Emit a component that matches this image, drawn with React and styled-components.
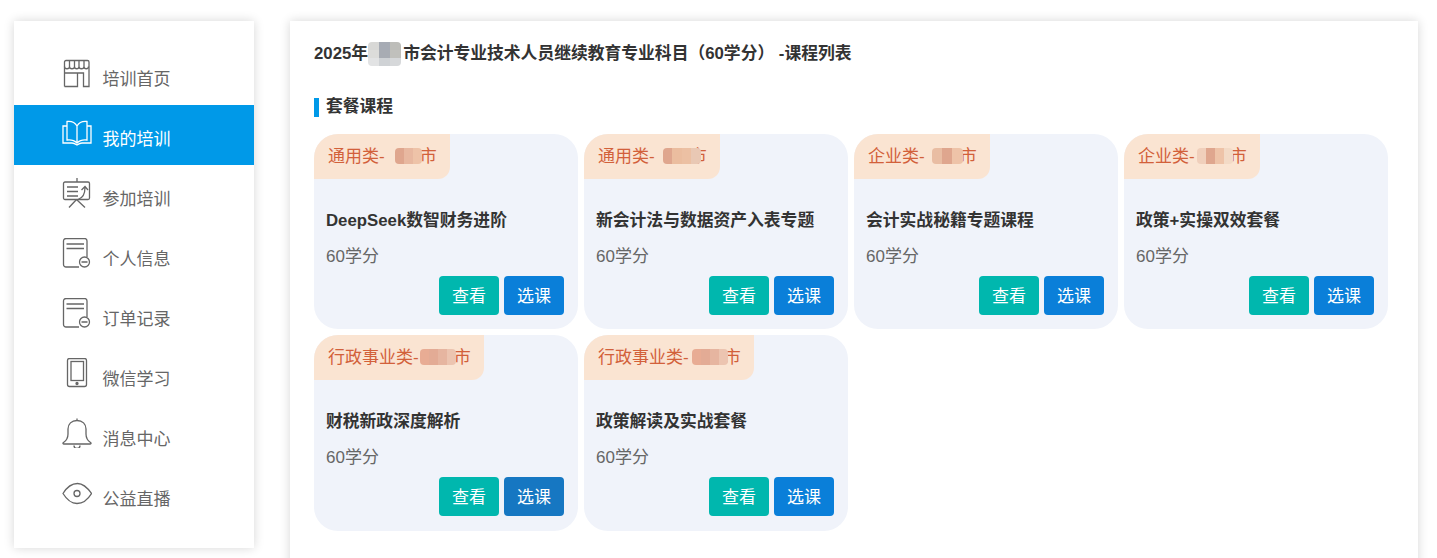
import React from "react";
import styled, { createGlobalStyle } from "styled-components";

const GlobalStyle = createGlobalStyle`
  html, body {
    margin: 0;
    padding: 0;
    height: 558px;
    overflow: hidden;
    background: #fff;
    font-family: "Liberation Sans", "Noto Sans CJK SC", sans-serif;
  }
  * { box-sizing: border-box; }
`;

const Page = styled.div`
  display: flex;
  align-items: flex-start;
  gap: 36px;
  padding: 21px 19px 0 14px;
`;

const Sidebar = styled.nav`
  flex: 0 0 240px;
  height: 527px;
  padding-top: 24px;
  background: #fff;
  box-shadow: 0 0 10px rgba(0, 0, 0, 0.16);
`;

const NavItem = styled.div`
  display: flex;
  align-items: center;
  gap: 10.5px;
  height: 60px;
  padding-left: 48px;
  font-size: 17px;
  color: ${(p) => (p.$active ? "#fff" : "#666")};
  background: ${(p) => (p.$active ? "#0099e8" : "transparent")};
`;

const NavIcon = styled.svg`
  flex: 0 0 30px;
  width: 30px;
  height: 30px;
  margin-bottom: 4px;
  fill: none;
  stroke: currentColor;
  stroke-width: 1.3;
`;

const NavLabel = styled.span`
  padding-top: 4px;
`;

const Main = styled.main`
  flex: 1;
  height: 600px;
  padding: 21px 24px 0;
  background: #fff;
  box-shadow: 0 0 10px rgba(0, 0, 0, 0.16);
`;

const Title = styled.h1`
  margin: 0;
  font-size: 16.8px;
  line-height: 24px;
  font-weight: 700;
  color: #333;
`;

const SectionHead = styled.h2`
  display: flex;
  align-items: flex-start;
  gap: 7px;
  height: 19px;
  margin: 32px 0 17px;
  font-size: 16.8px;
  line-height: 17px;
  font-weight: 700;
  color: #333;
  &::before {
    content: "";
    width: 5px;
    height: 19px;
    background: #0099e8;
  }
`;

const CardGrid = styled.div`
  display: flex;
  flex-wrap: wrap;
  gap: 6px;
`;

const Card = styled.article`
  width: 264px;
  height: 195.4px;
  border-radius: 24px;
  overflow: hidden;
  background: #f0f3fa;
`;

const Tag = styled.div`
  display: inline-block;
  vertical-align: top;
  height: 45px;
  padding: 0 13.7px 0 14px;
  font-size: 17px;
  line-height: 46px;
  color: #d2603a;
  background: #fae4d2;
  border-bottom-right-radius: 12px;
`;

const CardTitle = styled.h3`
  margin: 30px 0 0;
  padding-left: 12px;
  font-size: 16.8px;
  line-height: 24px;
  font-weight: 700;
  color: #333;
`;

const Credits = styled.p`
  margin: 12px 0 0;
  padding-left: 12px;
  font-size: 17px;
  line-height: 24px;
  color: #666;
`;

const Actions = styled.div`
  display: flex;
  justify-content: flex-end;
  gap: 5px;
  margin-top: 7px;
  padding-right: 14px;
`;

const Button = styled.button`
  width: 60px;
  height: 39px;
  padding: 0 0 2px;
  border: 0;
  border-radius: 4px;
  font: inherit;
  font-size: 17px;
  color: #fff;
  background: ${(p) => p.$bg};
`;

// pixelated cover over the blanked-out city name
const Masked = styled.span`
  position: relative;
  display: inline-block;
  width: 35px;
  height: 1em;
`;

const MosaicGrid = styled.span`
  position: absolute;
  left: ${(p) => p.$left}px;
  top: ${(p) => p.$top}px;
  display: grid;
  grid-template-columns: repeat(${(p) => p.$cols}, ${(p) => p.$cell}px);
  grid-auto-rows: ${(p) => p.$rowH}px;
  border-radius: 4px;
  overflow: hidden;
  filter: blur(0.5px);
`;

const MosaicCell = styled.span`
  background: ${(p) => p.$c};
`;

const Mosaic = ({ colors, cols, cell, rowH, left, top }) => (
  <Masked>
    <MosaicGrid $cols={cols} $cell={cell} $rowH={rowH} $left={left} $top={top}>
      {colors.map((c, i) => (
        <MosaicCell key={i} $c={c} />
      ))}
    </MosaicGrid>
  </Masked>
);

const StoreIcon = () => (
  <NavIcon viewBox="0 0 30 30">
    <path d="M2.5 28.5V4a1.5 1.5 0 0 1 1.5-1.5h21.5A1.5 1.5 0 0 1 27 4v24.5H21.5V15H2.5M15.5 15v13.5H2.5" />
    <path d="M2.5 8.5c0 3 5 3 5 0c0 3 5 3 5 0c0 3 4.500 3 4.500 0c0 3 5 3 5 0c0 3 4.500 3 4.500 0M7.500 2.500v6M12.500 2.500v6M17 2.500v6M22 2.500v6" />
  </NavIcon>
);

const BookIcon = () => (
  <NavIcon viewBox="0 0 30 30">
    <path d="M15 8C13 4.500 9 3 5 3.500V22c4-.5 7.500.5 10 3c2.500-2.500 6-3.500 10-3V3.500C21 3 17 4.500 15 8zM15 8v17" />
    <path d="M5 8H1v17h9c2 0 3.500 1 5 2c1.500-1 3-2 5-2h9V8h-4" />
  </NavIcon>
);

const BoardIcon = () => (
  <NavIcon viewBox="0 0 30 30">
    <path d="M15 0v4M3 4h23a1.500 1.500 0 0 1 1.500 1.500V20a1.500 1.500 0 0 1-1.500 1.500H3A1.500 1.500 0 0 1 1.500 20V5.500A1.500 1.500 0 0 1 3 4z" />
    <path d="M5 9h11M5 13.500h11M5 18h11M16 21.500C21 20 23 16 23 9.500M19.500 12l3.500-3.500l3 3.500M14.500 21.500L7 29.500M14.500 21.500L23 29.500" />
  </NavIcon>
);

const DocIcon = () => (
  <NavIcon viewBox="0 0 30 30">
    <path d="M17 29H4a2.500 2.500 0 0 1-2.500-2.500V3A2.500 2.500 0 0 1 4 .5h19A2.500 2.500 0 0 1 25 3v16" />
    <path d="M4.500 6h17.500M4.500 10.500h17.500M19.500 24h6" />
    <circle cx="22.500" cy="24" r="5" />
  </NavIcon>
);

const PhoneIcon = () => (
  <NavIcon viewBox="0 0 30 30">
    <rect x="5.500" y=".5" width="19" height="28" rx="2" />
    <rect x="9" y="3.500" width="12.500" height="19" />
    <circle cx="15" cy="25.500" r="1" fill="currentColor" />
  </NavIcon>
);

const BellIcon = () => (
  <NavIcon viewBox="0 0 30 30">
    <path d="M15 2.500c-5.500 0-9 3.500-9 8.500v5c0 4-1.500 6.500-4.500 8.500c-1 .7-.5 1.500 .5 1.500h26c1 0 1.500-.8 .5-1.500c-3-2-4.500-4.500-4.500-8.500v-5c0-5-3.500-8.500-9-8.500zM15 .5v2" />
    <path d="M12 27.500a3 3 0 0 0 6 0" />
  </NavIcon>
);

const EyeIcon = () => (
  <NavIcon viewBox="0 0 30 30">
    <path d="M1 15.500C5 9 10 5.500 15.500 5.500S25 9 29.500 15.500C25.500 22 20.500 25.500 15 25.500S5 22 1 15.500z" />
    <circle cx="15" cy="15.500" r="3" />
  </NavIcon>
);

const navItems = [
  { label: "培训首页", Icon: StoreIcon },
  { label: "我的培训", Icon: BookIcon, active: true },
  { label: "参加培训", Icon: BoardIcon },
  { label: "个人信息", Icon: DocIcon },
  { label: "订单记录", Icon: DocIcon },
  { label: "微信学习", Icon: PhoneIcon },
  { label: "消息中心", Icon: BellIcon },
  { label: "公益直播", Icon: EyeIcon },
];

const courses = [
  { kind: "通用类-", name: "DeepSeek数智财务进阶", left: 10, cell: 9, blot: ["#dfa68e", "#e8b8a0", "#eec3a8"] },
  { kind: "通用类-", name: "新会计法与数据资产入表专题", left: 8, cell: 9.5, blot: ["#dfa68e", "#ebbd9f", "#ecc0a3", "#e9c8b4"] },
  { kind: "企业类-", name: "会计实战秘籍专题课程", left: 7, cell: 10.3, blot: ["#e9bda3", "#dfa68e", "#eec3a8"] },
  { kind: "企业类-", name: "政策+实操双效套餐", left: 2, cell: 9, blot: ["#f0cfbb", "#dfa68e", "#eec3a8", "#f3dac6"] },
  { kind: "行政事业类-", name: "财税新政深度解析", left: 1, cell: 9, blot: ["#e8ac94", "#e3ab95", "#e6b5a0", "#ecc4b0"], darker: true },
  { kind: "行政事业类-", name: "政策解读及实战套餐", left: 3, cell: 9, blot: ["#e8ac94", "#e3ab95", "#e6b5a0", "#ecc4b0"] },
];

const titleMosaic = ["#d8d8d6", "#a6abb4", "#bdbdb9", "#dcdcda", "#a8acb3", "#c0c0bc", "#e2e3e4", "#cfd2d5", "#d6d8da"];

export default function App() {
  return (
    <>
      <GlobalStyle />
      <Page>
        <Sidebar>
          {navItems.map(({ label, Icon, active }) => (
            <NavItem key={label} $active={active}>
              <Icon />
              <NavLabel>{label}</NavLabel>
            </NavItem>
          ))}
        </Sidebar>
        <Main>
          <Title>
            2025年
            <Mosaic colors={titleMosaic} cols={3} cell={11} rowH={8} left={0} top={0} />
            市会计专业技术人员继续教育专业科目（60学分） -课程列表
          </Title>
          <SectionHead>套餐课程</SectionHead>
          <CardGrid>
            {courses.map((course) => (
              <Card key={course.name}>
                <Tag>
                  {course.kind}
                  <Mosaic
                    colors={course.blot}
                    cols={course.blot.length}
                    cell={course.cell}
                    rowH={16}
                    left={course.left}
                    top={3}
                  />
                  市
                </Tag>
                <CardTitle>{course.name}</CardTitle>
                <Credits>60学分</Credits>
                <Actions>
                  <Button $bg="#00b7ae">查看</Button>
                  <Button $bg={course.darker ? "#1677c2" : "#0a7fd9"}>选课</Button>
                </Actions>
              </Card>
            ))}
          </CardGrid>
        </Main>
      </Page>
    </>
  );
}
